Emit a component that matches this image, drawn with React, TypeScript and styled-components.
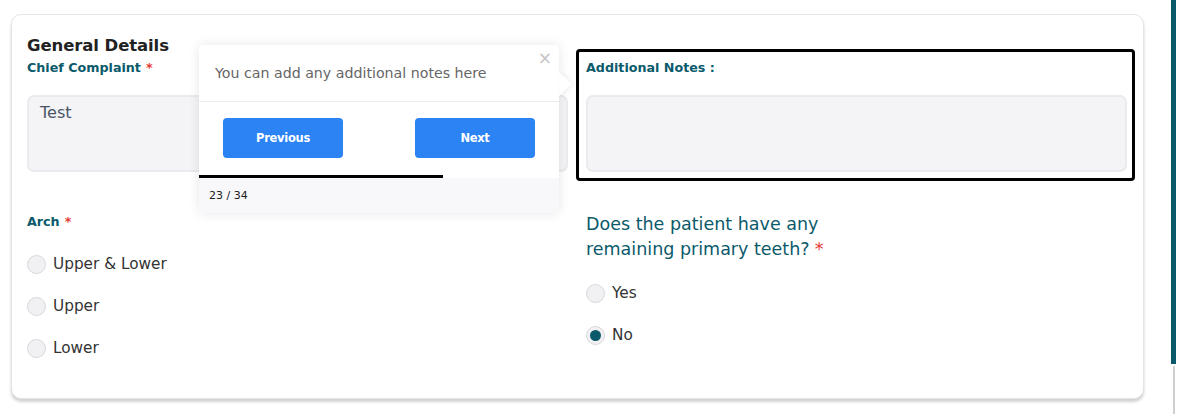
import React from "react";
import styled, { createGlobalStyle } from "styled-components";

const GlobalStyle = createGlobalStyle`
  html, body { margin: 0; padding: 0; background: #ffffff; }
  body { font-family: "DejaVu Sans", "Open Sans", sans-serif; }
  * { box-sizing: border-box; }
`;

const TEAL = "#0b5a6b";

const Page = styled.div`
  display: flex;
  width: 1180px;
  height: 414px;
  overflow: hidden;
  position: relative;
`;

const Main = styled.div`
  padding: 14px 0 0 11px;
  width: 1160px;
`;

const Card = styled.section`
  width: 1133px;
  height: 385px;
  border: 1px solid #e4e4e6;
  border-radius: 10px;
  box-shadow: 0 3px 3px rgba(0, 0, 0, 0.18);
  padding: 19px 15px 0 15px;
  background: #fff;
`;

const Title = styled.h2`
  margin: 0;
  font-size: 16.5px;
  font-weight: 700;
  line-height: 24px;
  color: #222;
  letter-spacing: -0.1px;
`;

const Grid = styled.div`
  display: grid;
  grid-template-columns: 541px 541px;
  column-gap: 18px;
  row-gap: 40px;
`;

const Field = styled.div`
  position: relative;
  display: flex;
  flex-direction: column;
`;

const Label = styled.label`
  font-size: 12.7px;
  font-weight: 700;
  line-height: 20px;
  color: ${TEAL};
`;

const Req = styled.span`
  color: #e53935;
  margin-left: 5px;
`;

const TextArea = styled.div`
  margin-top: 17px;
  height: 77px;
  border: 2px solid #ebeaee;
  border-radius: 7px;
  background: #f4f3f6;
  padding: 5px 11px;
  font-size: 16px;
  color: #4a5565;
  line-height: 22px;
`;

const Highlight = styled.div`
  position: absolute;
  inset: -9px -8px -9px -10px;
  border: 3px solid #000;
  border-radius: 4px;
  pointer-events: none;
`;

const Question = styled.div`
  font-size: 17.5px;
  line-height: 25px;
  color: ${TEAL};
  width: 270px;
`;

const Options = styled.div<{ $top: number }>`
  display: flex;
  flex-direction: column;
  gap: 18px;
  margin-top: ${(p) => p.$top}px;
`;

const Option = styled.div`
  display: flex;
  align-items: center;
  gap: 7px;
  height: 24px;
  font-size: 15.3px;
  color: #333;
`;

const Radio = styled.span<{ $checked?: boolean }>`
  width: 19px;
  height: 19px;
  border-radius: 50%;
  border: 1px solid #d9d8dd;
  background: #f1f0f3;
  display: flex;
  align-items: center;
  justify-content: center;
  &::after {
    content: "";
    display: ${(p) => (p.$checked ? "block" : "none")};
    width: 11px;
    height: 11px;
    border-radius: 50%;
    background: ${TEAL};
  }
`;

const Rail = styled.div`
  position: absolute;
  left: 1171px;
  top: 0;
  width: 5px;
  height: 364px;
  background: ${TEAL};
`;

const RailLine = styled.div`
  position: absolute;
  left: 1173px;
  top: 366px;
  width: 2px;
  height: 48px;
  background: #cfcfcf;
`;

const Popover = styled.div`
  position: absolute;
  left: 199px;
  top: 45px;
  width: 360px;
  background: #fff;
  border-radius: 4px;
  box-shadow: 0 0 12px rgba(0, 0, 0, 0.1);
  font-family: "DejaVu Sans", sans-serif;
`;

const Arrow = styled.div`
  position: absolute;
  right: -13px;
  top: 27px;
  width: 0;
  height: 0;
  border-top: 12px solid transparent;
  border-bottom: 12px solid transparent;
  border-left: 13px solid #fff;
  filter: drop-shadow(2px 0 2px rgba(0, 0, 0, 0.06));
`;

const PopHeader = styled.div`
  height: 57px;
  display: flex;
  align-items: center;
  padding: 0 16px;
  font-size: 14.2px;
  color: #666;
  border-bottom: 1px solid #ececec;
`;

const Close = styled.span`
  position: absolute;
  right: 7px;
  top: 4px;
  font-size: 17px;
  color: #c4c4c4;
  line-height: 18px;
`;

const PopActions = styled.div`
  display: flex;
  justify-content: space-between;
  padding: 16px 24px 17px;
`;

const Btn = styled.button`
  width: 120px;
  height: 40px;
  border: none;
  border-radius: 4px;
  background: #2b83f4;
  color: #fff;
  font-family: inherit;
  font-size: 11.5px;
  font-weight: 600;
  letter-spacing: -0.3px;
`;

const Progress = styled.div`
  height: 3px;
  background: transparent;
`;

const ProgressFill = styled.div`
  height: 100%;
  background: #000;
`;

const PopFooter = styled.div`
  height: 35px;
  background: #f8f8fa;
  display: flex;
  align-items: center;
  padding: 0 10px;
  font-size: 11px;
  color: #222;
  border-radius: 0 0 4px 4px;
`;

export default function App() {
  const step = 23;
  const total = 34;
  return (
    <>
      <GlobalStyle />
      <Page>
        <Main>
          <Card>
            <Title>General Details</Title>
            <Grid>
              <Field>
                <Label>
                  Chief Complaint<Req>*</Req>
                </Label>
                <TextArea>Test</TextArea>
              </Field>
              <Field>
                <Highlight />
                <Label>Additional Notes :</Label>
                <TextArea />
              </Field>
              <Field>
                <Label>
                  Arch<Req>*</Req>
                </Label>
                <Options $top={20}>
                  <Option>
                    <Radio />
                    Upper &amp; Lower
                  </Option>
                  <Option>
                    <Radio />
                    Upper
                  </Option>
                  <Option>
                    <Radio />
                    Lower
                  </Option>
                </Options>
              </Field>
              <Field>
                <Question>
                  Does the patient have any remaining primary teeth?<Req>*</Req>
                </Question>
                <Options $top={19}>
                  <Option>
                    <Radio />
                    Yes
                  </Option>
                  <Option>
                    <Radio $checked />
                    No
                  </Option>
                </Options>
              </Field>
            </Grid>
          </Card>
        </Main>
        <Rail />
        <RailLine />
        <Popover>
          <Arrow />
          <Close>×</Close>
          <PopHeader>You can add any additional notes here</PopHeader>
          <PopActions>
            <Btn>Previous</Btn>
            <Btn>Next</Btn>
          </PopActions>
          <Progress>
            <ProgressFill style={{ width: `${(step / total) * 100}%` }} />
          </Progress>
          <PopFooter>
            {step} / {total}
          </PopFooter>
        </Popover>
      </Page>
    </>
  );
}
